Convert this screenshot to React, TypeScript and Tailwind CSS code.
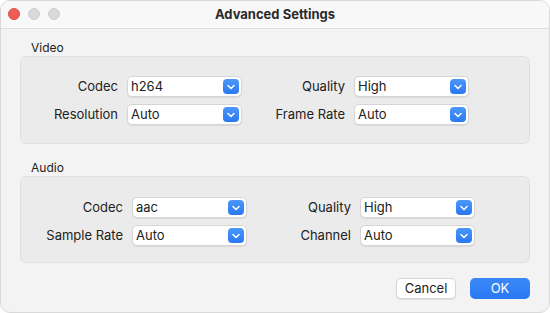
import React from "react";

function Select({ value }: { value: string }) {
  return (
    <div className="relative flex h-[21px] w-[115px] items-center rounded-[5px] border border-[#d6d6d6] bg-white pl-[3px] shadow-[0_1px_1px_rgba(0,0,0,0.08)]">
      <span className="text-[13px] leading-none text-[#222]">{value}</span>
      <div className="absolute right-[2px] top-[2px] flex h-[15px] w-[16px] items-center justify-center rounded-[4px] bg-gradient-to-b from-[#4c97fa] to-[#2a78f3]">
        <svg width="8" height="6" viewBox="0 0 8 6" fill="none">
          <path d="M1 1.5 L4 4.5 L7 1.5" stroke="white" strokeWidth="1.5" strokeLinecap="round" strokeLinejoin="round" />
        </svg>
      </div>
    </div>
  );
}

function Label({ children }: { children: React.ReactNode }) {
  return <div className="text-right text-[13px] leading-none text-[#222]">{children}</div>;
}

export default function App() {
  return (
    <div className="h-[313px] w-[550px] bg-white" style={{ fontFamily: "Inter, 'Liberation Sans', sans-serif" }}>
      <div className="flex h-[313px] w-[550px] flex-col overflow-hidden rounded-[10px] border border-[#d9d9d9] bg-[#f3f3f3]">
        <div className="relative flex h-[28px] shrink-0 items-center justify-center border-b border-[#dedede] bg-[#f8f8f8]">
          <div className="absolute left-[7px] top-[7px] flex gap-[8px]">
            <div className="h-[12px] w-[12px] rounded-full bg-[#ee5e57] border border-[#de4d45]" />
            <div className="h-[12px] w-[12px] rounded-full bg-[#d9d9d9] border border-[#cfcfcf]" />
            <div className="h-[12px] w-[12px] rounded-full bg-[#d9d9d9] border border-[#cfcfcf]" />
          </div>
          <span className="text-[13px] font-bold text-[#2a2a2a]">Advanced Settings</span>
        </div>

        <div className="flex flex-col px-[19px]">
          <div className="mt-[11px] h-[16px] pl-[11px] text-[12px] leading-[16px] text-[#222]">Video</div>
          <div className="h-[88px] rounded-[6px] border border-[#e0e0e0] bg-[#ebebeb] pt-[19px]">
            <div className="grid grid-cols-[97px_115px_94px_115px] items-center gap-x-[9px] gap-y-[7px]">
              <Label>Codec</Label>
              <Select value="h264" />
              <Label>Quality</Label>
              <Select value="High" />
              <Label>Resolution</Label>
              <Select value="Auto" />
              <Label>Frame Rate</Label>
              <Select value="Auto" />
            </div>
          </div>

          <div className="mt-[16px] h-[16px] pl-[11px] text-[12px] leading-[16px] text-[#222]">Audio</div>
          <div className="h-[87px] rounded-[6px] border border-[#e0e0e0] bg-[#ebebeb] pt-[20px]">
            <div className="grid grid-cols-[102px_115px_95px_115px] items-center gap-x-[9px] gap-y-[7px]">
              <Label>Codec</Label>
              <Select value="aac" />
              <Label>Quality</Label>
              <Select value="High" />
              <Label>Sample Rate</Label>
              <Select value="Auto" />
              <Label>Channel</Label>
              <Select value="Auto" />
            </div>
          </div>

          <div className="mt-[15px] flex justify-end gap-[14px]">
            <button className="h-[21px] w-[60px] rounded-[5px] border border-[#d6d6d6] bg-white text-[13px] leading-none text-[#222] shadow-[0_1px_1px_rgba(0,0,0,0.08)]">
              Cancel
            </button>
            <button className="h-[21px] w-[60px] rounded-[5px] bg-gradient-to-b from-[#3b89f7] to-[#2a78f3] text-[13px] leading-none text-white">
              OK
            </button>
          </div>
        </div>
      </div>
    </div>
  );
}
